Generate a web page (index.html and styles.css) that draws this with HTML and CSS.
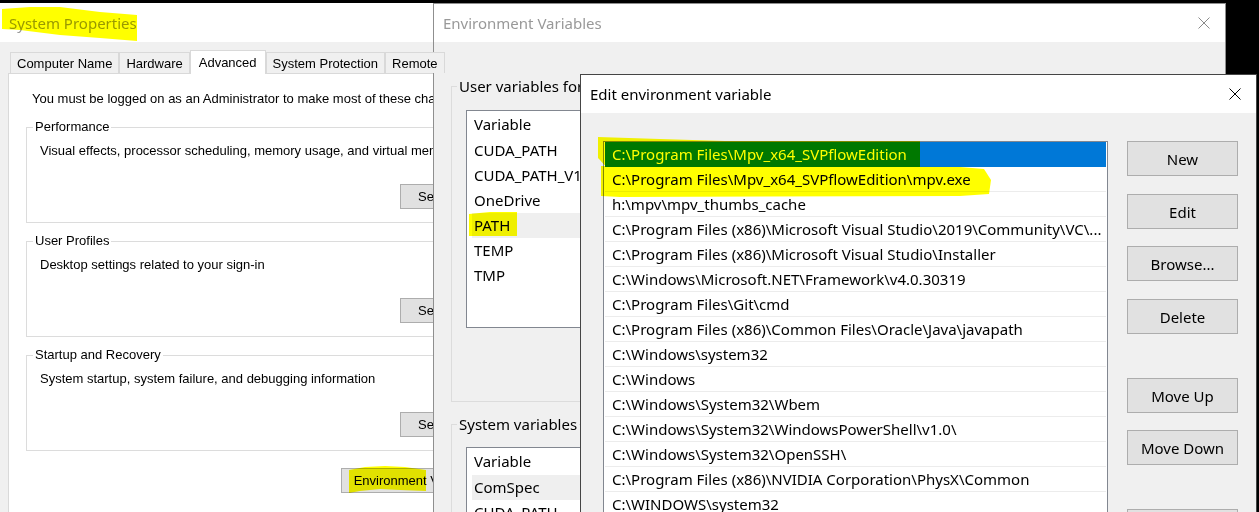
FILE: index.html
```html
<!DOCTYPE html>
<html>
<head>
<meta charset="utf-8">
<title>Environment Variables</title>
<link rel="stylesheet" href="styles.css">
</head>
<body>
<div class="desktop">

  <section class="win win-sys">
    <div class="titlebar title-inactive">System Properties</div>
    <div class="sys-body">
      <div class="tabs">
        <div class="tab">Computer Name</div>
        <div class="tab">Hardware</div>
        <div class="tab active">Advanced</div>
        <div class="tab">System Protection</div>
        <div class="tab">Remote</div>
      </div>
      <div class="tab-panel">
        <p class="admin-note">You must be logged on as an Administrator to make most of these changes.</p>
        <fieldset class="sys-group">
          <legend>Performance</legend>
          <p>Visual effects, processor scheduling, memory usage, and virtual memory</p>
          <button class="btn sys-btn">Settings...</button>
        </fieldset>
        <fieldset class="sys-group">
          <legend>User Profiles</legend>
          <p>Desktop settings related to your sign-in</p>
          <button class="btn sys-btn">Settings...</button>
        </fieldset>
        <fieldset class="sys-group">
          <legend>Startup and Recovery</legend>
          <p>System startup, system failure, and debugging information</p>
          <button class="btn sys-btn">Settings...</button>
        </fieldset>
        <button class="btn env-btn">Environment Variables...</button>
      </div>
    </div>
  </section>

  <section class="win win-env">
    <div class="titlebar title-inactive">
      <span>Environment Variables</span>
      <svg class="close" width="12" height="12" viewBox="0 0 12 12"><path d="M0.5 0.5 L11.5 11.5 M11.5 0.5 L0.5 11.5" stroke="#8a8a8a" stroke-width="1" fill="none"/></svg>
    </div>
    <div class="env-body">
      <fieldset class="env-group user-group">
        <legend>User variables for</legend>
        <div class="varlist user-list">
          <div class="var-head">Variable</div>
          <div class="var-row">CUDA_PATH</div>
          <div class="var-row">CUDA_PATH_V11_0</div>
          <div class="var-row">OneDrive</div>
          <div class="var-row selected">PATH</div>
          <div class="var-row">TEMP</div>
          <div class="var-row">TMP</div>
        </div>
      </fieldset>
      <fieldset class="env-group sys-vars">
        <legend>System variables</legend>
        <div class="varlist">
          <div class="var-head">Variable</div>
          <div class="var-row selected">ComSpec</div>
          <div class="var-row">CUDA_PATH</div>
        </div>
      </fieldset>
    </div>
  </section>

  <section class="win win-edit">
    <div class="titlebar title-active">
      <span>Edit environment variable</span>
      <svg class="close" width="12" height="12" viewBox="0 0 12 12"><path d="M0.5 0.5 L11.5 11.5 M11.5 0.5 L0.5 11.5" stroke="#000" stroke-width="1" fill="none"/></svg>
    </div>
    <div class="edit-body">
      <div class="path-list">
        <div class="path-row selected">C:\Program Files\Mpv_x64_SVPflowEdition</div>
        <div class="path-row">C:\Program Files\Mpv_x64_SVPflowEdition\mpv.exe</div>
        <div class="path-row">h:\mpv\mpv_thumbs_cache</div>
        <div class="path-row">C:\Program Files (x86)\Microsoft Visual Studio\2019\Community\VC\...</div>
        <div class="path-row">C:\Program Files (x86)\Microsoft Visual Studio\Installer</div>
        <div class="path-row">C:\Windows\Microsoft.NET\Framework\v4.0.30319</div>
        <div class="path-row">C:\Program Files\Git\cmd</div>
        <div class="path-row">C:\Program Files (x86)\Common Files\Oracle\Java\javapath</div>
        <div class="path-row">C:\Windows\system32</div>
        <div class="path-row">C:\Windows</div>
        <div class="path-row">C:\Windows\System32\Wbem</div>
        <div class="path-row">C:\Windows\System32\WindowsPowerShell\v1.0\</div>
        <div class="path-row">C:\Windows\System32\OpenSSH\</div>
        <div class="path-row">C:\Program Files (x86)\NVIDIA Corporation\PhysX\Common</div>
        <div class="path-row">C:\WINDOWS\system32</div>
      </div>
      <div class="edit-buttons">
        <button class="btn ebtn">New</button>
        <button class="btn ebtn gap18">Edit</button>
        <button class="btn ebtn">Browse...</button>
        <button class="btn ebtn gap18">Delete</button>
        <button class="btn ebtn gap44">Move Up</button>
        <button class="btn ebtn">Move Down</button>
        <button class="btn ebtn gap44">Edit text...</button>
      </div>
    </div>
  </section>

  <svg class="marker" width="1259" height="512" viewBox="0 0 1259 512">
    <polygon points="2,9 30,7 60,7 100,12 137,15 137,41 100,38 60,35 20,30 2,29"/>
    <polygon points="349,470 365,467 385,466 405,467 426,470 426,491 400,490 380,489 360,491 349,493"/>
    <polygon points="469,214 490,212 517,212 517,236 469,236"/>
    <polygon points="598,137 660,139 725,141 920,141 920,167 606,167 600,160 598,158"/>
    <polygon points="601,166 960,167 984,169 991,180 989,194 960,196 620,197 601,196"/>
  </svg>

</div>
</body>
</html>
```

FILE: styles.css
```css
* { box-sizing: border-box; }

html, body {
  margin: 0;
  padding: 0;
  background: #000;
}

.desktop {
  position: relative;
  width: 1259px;
  height: 512px;
  overflow: hidden;
  background: #000;
  isolation: isolate;
}

.win {
  position: absolute;
  background: #f0f0f0;
  overflow: hidden;
}

.titlebar {
  background: #fff;
  display: flex;
  align-items: center;
  justify-content: space-between;
  font-family: "Noto Sans", "Open Sans", sans-serif;
  font-size: 15px;
  white-space: nowrap;
}

.title-inactive { color: #999; }
.title-active { color: #000; }

.close { margin-right: 15px; flex: none; }

/* ---------- System Properties ---------- */
.win-sys {
  left: 0;
  top: 3px;
  width: 540px;
  height: 520px;
  font-family: "Liberation Sans", Arial, sans-serif;
  font-size: 13px;
  color: #000;
}

.win-sys .titlebar {
  height: 39px;
  padding-left: 9px;
}

.tabs {
  display: flex;
  align-items: flex-end;
  height: 23px;
  margin: 8px 0 0 10px;
  position: relative;
  z-index: 1;
}

.tab {
  height: 21px;
  line-height: 21px;
  padding: 0 6px;
  border: 1px solid #d9d9d9;
  border-bottom: none;
  background: #f0f0f0;
  white-space: nowrap;
}

.tab.active {
  height: 24px;
  line-height: 23px;
  margin-bottom: -1px;
  padding: 0 8px 1px;
  background: #fff;
}

.tab-panel {
  margin-left: 8px;
  height: 460px;
  background: #fff;
  border: 1px solid #d9d9d9;
}

.admin-note {
  margin: 17px 0 0 23px;
  line-height: 16px;
  white-space: nowrap;
}

.sys-group {
  margin: 10px 0 0 17px;
  width: 478px;
  padding: 0 0 13px 0;
  border: 1px solid #dcdcdc;
  min-inline-size: 0;
}

.admin-note + .sys-group { margin-top: 12px; }

.sys-group legend {
  margin-left: 6px;
  padding: 0 2px;
  line-height: 16px;
}

.sys-group p {
  margin: 8px 0 0 13px;
  line-height: 16px;
  white-space: nowrap;
}

.btn {
  display: block;
  margin: 0;
  padding: 0;
  background: #e1e1e1;
  border: 1px solid #adadad;
  color: #000;
  white-space: nowrap;
}

.sys-btn {
  width: 94px;
  height: 25px;
  margin: 25px 9px 0 auto;
  font: 13px "Liberation Sans", Arial, sans-serif;
}

.env-btn {
  width: 166px;
  height: 25px;
  margin: 17px 0 0 332px;
  font: 13px "Liberation Sans", Arial, sans-serif;
}

/* ---------- Environment Variables ---------- */
.win-env {
  left: 433px;
  top: 3px;
  width: 793px;
  height: 530px;
  border: 1px solid #8f8f8f;
  font-family: "Noto Sans", "Open Sans", sans-serif;
  font-size: 15px;
}

.win-env .titlebar {
  height: 38px;
  padding-left: 9px;
}

.env-body {
  padding-top: 34px;
}

.env-group {
  margin: 0 0 0 17px;
  width: 740px;
  padding: 0 0 73px 0;
  border: 1px solid #dcdcdc;
  min-inline-size: 0;
}

.env-group legend {
  margin-left: 5px;
  padding: 0 2px;
  line-height: 20px;
  white-space: nowrap;
}

.env-group.sys-vars { margin-top: 12px; }

.varlist {
  margin: 14px 0 0 14px;
  width: 560px;
  background: #fff;
  border: 1px solid #828790;
  padding: 0 0 0 5px;
}

.sys-vars .varlist { margin-top: 13px; }

.user-list { height: 218px; }

.var-head {
  height: 27px;
  line-height: 27px;
  padding-left: 2px;
}

.var-row {
  height: 25px;
  line-height: 25px;
  padding-left: 2px;
  white-space: nowrap;
}

.var-row.selected { background: #efefef; }

/* ---------- Edit environment variable ---------- */
.win-edit {
  left: 580px;
  top: 74px;
  width: 677px;
  height: 460px;
  border: 1px solid #454545;
  font-family: "Noto Sans", "Open Sans", sans-serif;
  font-size: 15px;
}

.win-edit .titlebar {
  height: 38px;
  padding-left: 9px;
}

.edit-body {
  display: flex;
  align-items: flex-start;
  padding: 28px 0 0 22px;
}

.path-list {
  width: 505px;
  height: 420px;
  background: #fff;
  border: 1px solid #828790;
  padding: 0 1px;
  flex: none;
}

.path-row {
  height: 25px;
  line-height: 24px;
  padding-left: 7px;
  border-bottom: 1px solid #ececec;
  white-space: nowrap;
  overflow: hidden;
}

.path-row.selected {
  background: #0078d7;
  color: #fff;
  border-bottom-color: #0078d7;
}

.edit-buttons {
  margin-left: 19px;
  display: flex;
  flex-direction: column;
  gap: 17px;
}

.ebtn {
  width: 111px;
  height: 35px;
  font: 15px "Noto Sans", "Open Sans", sans-serif;
}

.gap18 { margin-top: 1px; }
.gap44 { margin-top: 27px; }

/* ---------- highlighter strokes ---------- */
.marker {
  position: absolute;
  left: 0;
  top: 0;
  mix-blend-mode: multiply;
  pointer-events: none;
  z-index: 5;
}

.marker polygon { fill: #ffff00; }
```
